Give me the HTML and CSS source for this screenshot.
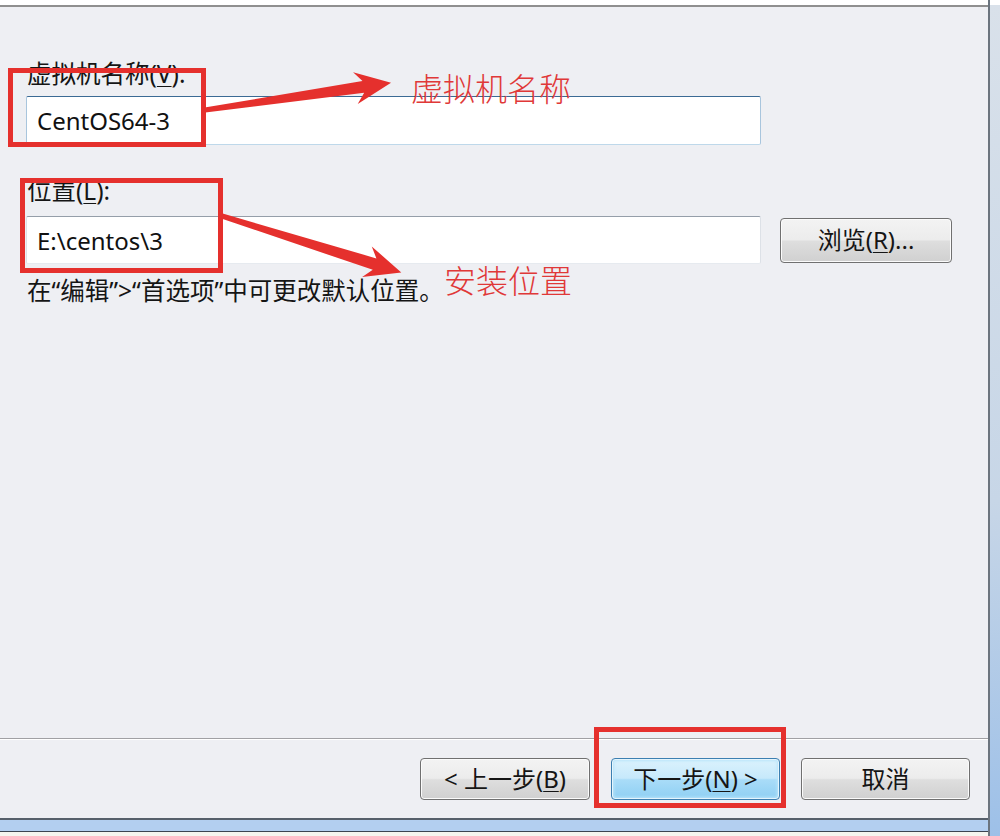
FILE: index.html
```html
<!DOCTYPE html>
<html lang="zh-CN">
<head>
<meta charset="utf-8">
<title>新建虚拟机向导</title>
<link rel="stylesheet" href="styles.css">
</head>
<body>
<div class="window">
  <div class="dialog">
    <div class="topbar"></div>
    <main class="content">
      <div class="label">虚拟机名称(<u>V</u>):</div>
      <div class="input input-focus">CentOS64-3</div>
      <div class="label label2">位置(<u>L</u>):</div>
      <div class="row">
        <div class="input">E:\centos\3</div>
        <button class="btn browse">浏览(<u>R</u>)...</button>
      </div>
      <p class="hint">在“编辑”&gt;“首选项”中可更改默认位置。</p>
    </main>
    <div class="separator"></div>
    <footer class="buttons">
      <button class="btn w-back">&lt; 上一步(<u>B</u>)</button>
      <button class="btn primary w-next">下一步(<u>N</u>) &gt;</button>
      <button class="btn w-cancel">取消</button>
    </footer>
    <div class="bottom-frame"></div>
  </div>
  <div class="right-frame"></div>

  <div class="annot-box box1"></div>
  <div class="annot-box box2"></div>
  <div class="annot-box box3"></div>
  <svg class="arrows" width="1000" height="836" viewBox="0 0 1000 836" xmlns="http://www.w3.org/2000/svg">
    <polygon transform="translate(205 110) rotate(-8.3)" points="0,-2.5 160,-6 152,-16 188,0 152,16 160,6 0,2.5" fill="#e5302d"/>
    <polygon transform="translate(222 216) rotate(17.5)" points="0,-2.5 160,-6 152,-16 188,0 152,16 160,6 0,2.5" fill="#e5302d"/>
  </svg>
  <div class="annot-text text1">虚拟机名称</div>
  <div class="annot-text text2">安装位置</div>
</div>
</body>
</html>
```

FILE: styles.css
```css
* {
  box-sizing: border-box;
}

html,
body {
  margin: 0;
  padding: 0;
}

body {
  width: 1000px;
  height: 836px;
  overflow: hidden;
  background: #eeeff3;
  font-family: "Noto Sans", "Noto Sans CJK SC", sans-serif;
  color: #151515;
}

.window {
  position: relative;
  display: flex;
  width: 1000px;
  height: 836px;
}

.dialog {
  width: 988px;
  display: flex;
  flex-direction: column;
  background: #eeeff3;
}

.topbar {
  height: 7px;
  background: #ffffff;
  border-bottom: 2px solid #8f8f8f;
}

.content {
  flex: 1;
  padding: 53px 0 0 26px;
}

.label {
  font-size: 24.5px;
  line-height: 28px;
  margin-left: 1px;
}

.label u,
.btn u {
  text-decoration-thickness: 1px;
  text-underline-offset: 3px;
}

.label2 {
  margin-top: 32px;
}

.input {
  display: flex;
  align-items: center;
  width: 735px;
  height: 49px;
  margin-top: 8px;
  padding-left: 10px;
  background: #ffffff;
  border: 1px solid;
  border-color: #959ea9 #dde1e7 #e6eaef #dde1e7;
  border-radius: 2px;
  font-size: 24px;
  color: #111;
}

.input-focus {
  border-color: #3b6a94 #a8c5dd #bed8ea #a8c5dd;
}

.row {
  display: flex;
  align-items: center;
  gap: 19px;
  margin-top: 11px;
}

.row .input {
  margin-top: 0;
  height: 48px;
}

.hint {
  margin: 13px 0 0 1px;
  font-size: 24.5px;
  line-height: 28px;
}

.btn {
  height: 42px;
  padding: 0;
  font-family: "Noto Sans", "Noto Sans CJK SC", sans-serif;
  font-size: 24px;
  line-height: 26px;
  color: #151515;
  border: 1px solid #707070;
  border-radius: 4px;
  background: linear-gradient(#f3f3f3 0%, #ececec 48%, #dedede 52%, #d0d0d0 100%);
  box-shadow: inset 0 0 0 1px #fbfbfb;
}

.browse {
  width: 172px;
  height: 45px;
}

.primary {
  border-color: #3c7fb1;
  background: linear-gradient(#dcf2fd 0%, #c6e9fb 48%, #a9dcf8 52%, #8ecff3 100%);
  box-shadow: inset 0 0 0 1px #e4f5fd, inset 0 0 3px 2px #b9e4fa;
}

.separator {
  height: 2px;
  border-top: 1px solid #a0a0a3;
  background: #ffffff;
}

.buttons {
  display: flex;
  justify-content: flex-end;
  gap: 21px;
  padding: 18px 18px 18px 0;
}

.w-back {
  width: 170px;
}

.w-next {
  width: 169px;
}

.w-cancel {
  width: 169px;
}

.bottom-frame {
  height: 18px;
  background: linear-gradient(to bottom, #565f6a 0 2px, #b3cff0 2px 13px, #3c4551 13px 14px, #f5f5ef 14px);
}

.right-frame {
  width: 12px;
  background: linear-gradient(to right, #6b747e 0 2px, transparent 2px),
    linear-gradient(to bottom, #ffffff 0 5px, #d9e1ea 5px, #c7d6e7 60%, #9dc0e8 100%);
}

.annot-box {
  position: absolute;
  border: 5px solid #e5302d;
}

.box1 {
  left: 8px;
  top: 68px;
  width: 198px;
  height: 79px;
}

.box2 {
  left: 20px;
  top: 178px;
  width: 203px;
  height: 95px;
}

.box3 {
  left: 594px;
  top: 727px;
  width: 192px;
  height: 81px;
}

.arrows {
  position: absolute;
  left: 0;
  top: 0;
  pointer-events: none;
}

.annot-text {
  position: absolute;
  font-family: "Noto Sans CJK SC", sans-serif;
  font-weight: 300;
  font-size: 32px;
  line-height: 32px;
  color: #e03838;
  white-space: nowrap;
}

.text1 {
  left: 411px;
  top: 71px;
}

.text2 {
  left: 444px;
  top: 263px;
}
```
